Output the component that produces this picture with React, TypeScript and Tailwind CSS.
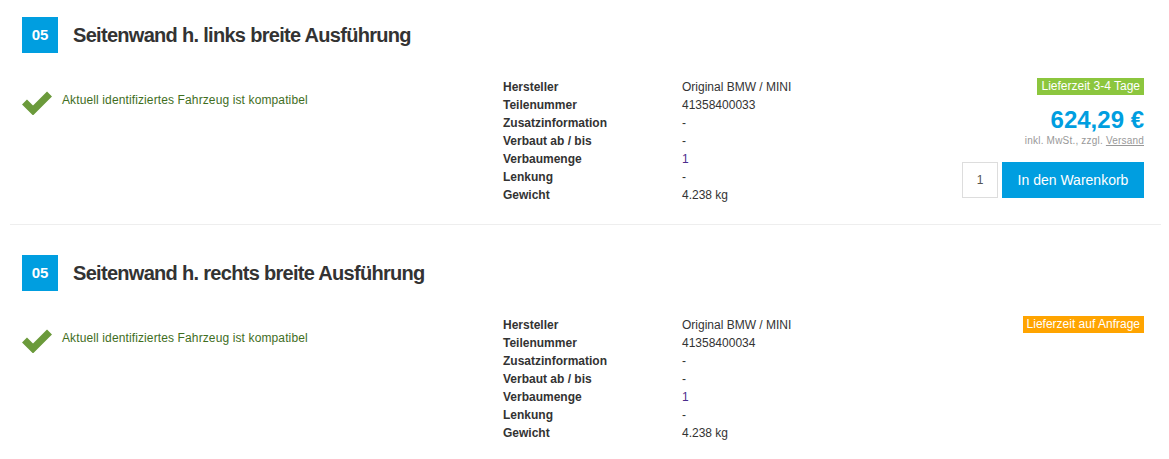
import React from "react";

const specs = (nr: string) => [
  ["Hersteller", "Original BMW / MINI"],
  ["Teilenummer", nr],
  ["Zusatzinformation", "-"],
  ["Verbaut ab / bis", "-"],
  ["Verbaumenge", "1"],
  ["Lenkung", "-"],
  ["Gewicht", "4.238 kg"],
];

function Check() {
  return (
    <svg width="30" height="24" viewBox="0 0 30 24" className="shrink-0">
      <path d="M2.5 11 L11 19.5 L27.5 3" fill="none" stroke="#6b9a3b" strokeWidth="7" strokeLinecap="butt" strokeLinejoin="miter" />
    </svg>
  );
}

function Item({ title, nr, available }: { title: string; nr: string; available: boolean }) {
  return (
    <div className="pl-[22px] pr-[25px]">
      <div className="flex items-center h-[36px]">
        <div className="w-[36px] h-[36px] bg-[#009ee0] text-white font-bold text-[15px] flex items-center justify-center">05</div>
        <h2 className="ml-[15px] text-[20px] font-bold text-[#333] tracking-[-0.7px]">{title}</h2>
      </div>
      <div className="flex mt-[24px]">
        <div className="w-[481px] flex items-start pt-[14px]">
          <Check />
          <span className="ml-[10px] text-[12px] text-[#3f6e1e] leading-[18px] mt-[0px] tracking-[0.12px]">Aktuell identifiziertes Fahrzeug ist kompatibel</span>
        </div>
        <div className="w-[300px] text-[12px] text-[#333] pt-[1px]">
          {specs(nr).map(([k, v]) => (
            <div key={k} className="flex h-[18px] items-center">
              <div className="w-[179px] font-bold">{k}</div>
              <div className={v === "1" ? "text-[#4b2c8c]" : ""}>{v}</div>
            </div>
          ))}
        </div>
        <div className="flex-1 flex flex-col items-end pt-[1px]">
          {available ? (
            <>
              <div className="bg-[#8cc63e] text-white text-[12px] leading-[17px] px-[4px]">Lieferzeit 3-4 Tage</div>
              <div className="mt-[12px] text-[24px] font-bold text-[#009ee0] leading-[26px]">624,29 €</div>
              <div className="mt-[2px] text-[10px] text-[#999] leading-[12px] tracking-[0.2px]">
                inkl. MwSt., zzgl. <span className="underline">Versand</span>
              </div>
              <div className="flex mt-[15px]">
                <div className="w-[36px] h-[36px] border border-[#ddd] flex items-center justify-center text-[12px] text-[#555]">1</div>
                <button className="ml-[4px] w-[142px] h-[36px] bg-[#009ee0] text-white text-[14px]">In den Warenkorb</button>
              </div>
            </>
          ) : (
            <div className="bg-[#ffa400] text-white text-[12px] leading-[17px] px-[4px]">Lieferzeit auf Anfrage</div>
          )}
        </div>
      </div>
    </div>
  );
}

export default function App() {
  return (
    <div className="w-[1169px] h-[459px] bg-white overflow-hidden" style={{ fontFamily: '"Liberation Sans", Arial, sans-serif' }}>
      <div className="pt-[17px] pb-[20px]">
        <Item title="Seitenwand h. links breite Ausführung" nr="41358400033" available={true} />
      </div>
      <div className="ml-[10px] mr-[8px] h-px bg-[#eeeeee]" />
      <div className="pt-[30px]">
        <Item title="Seitenwand h. rechts breite Ausführung" nr="41358400034" available={false} />
      </div>
    </div>
  );
}
